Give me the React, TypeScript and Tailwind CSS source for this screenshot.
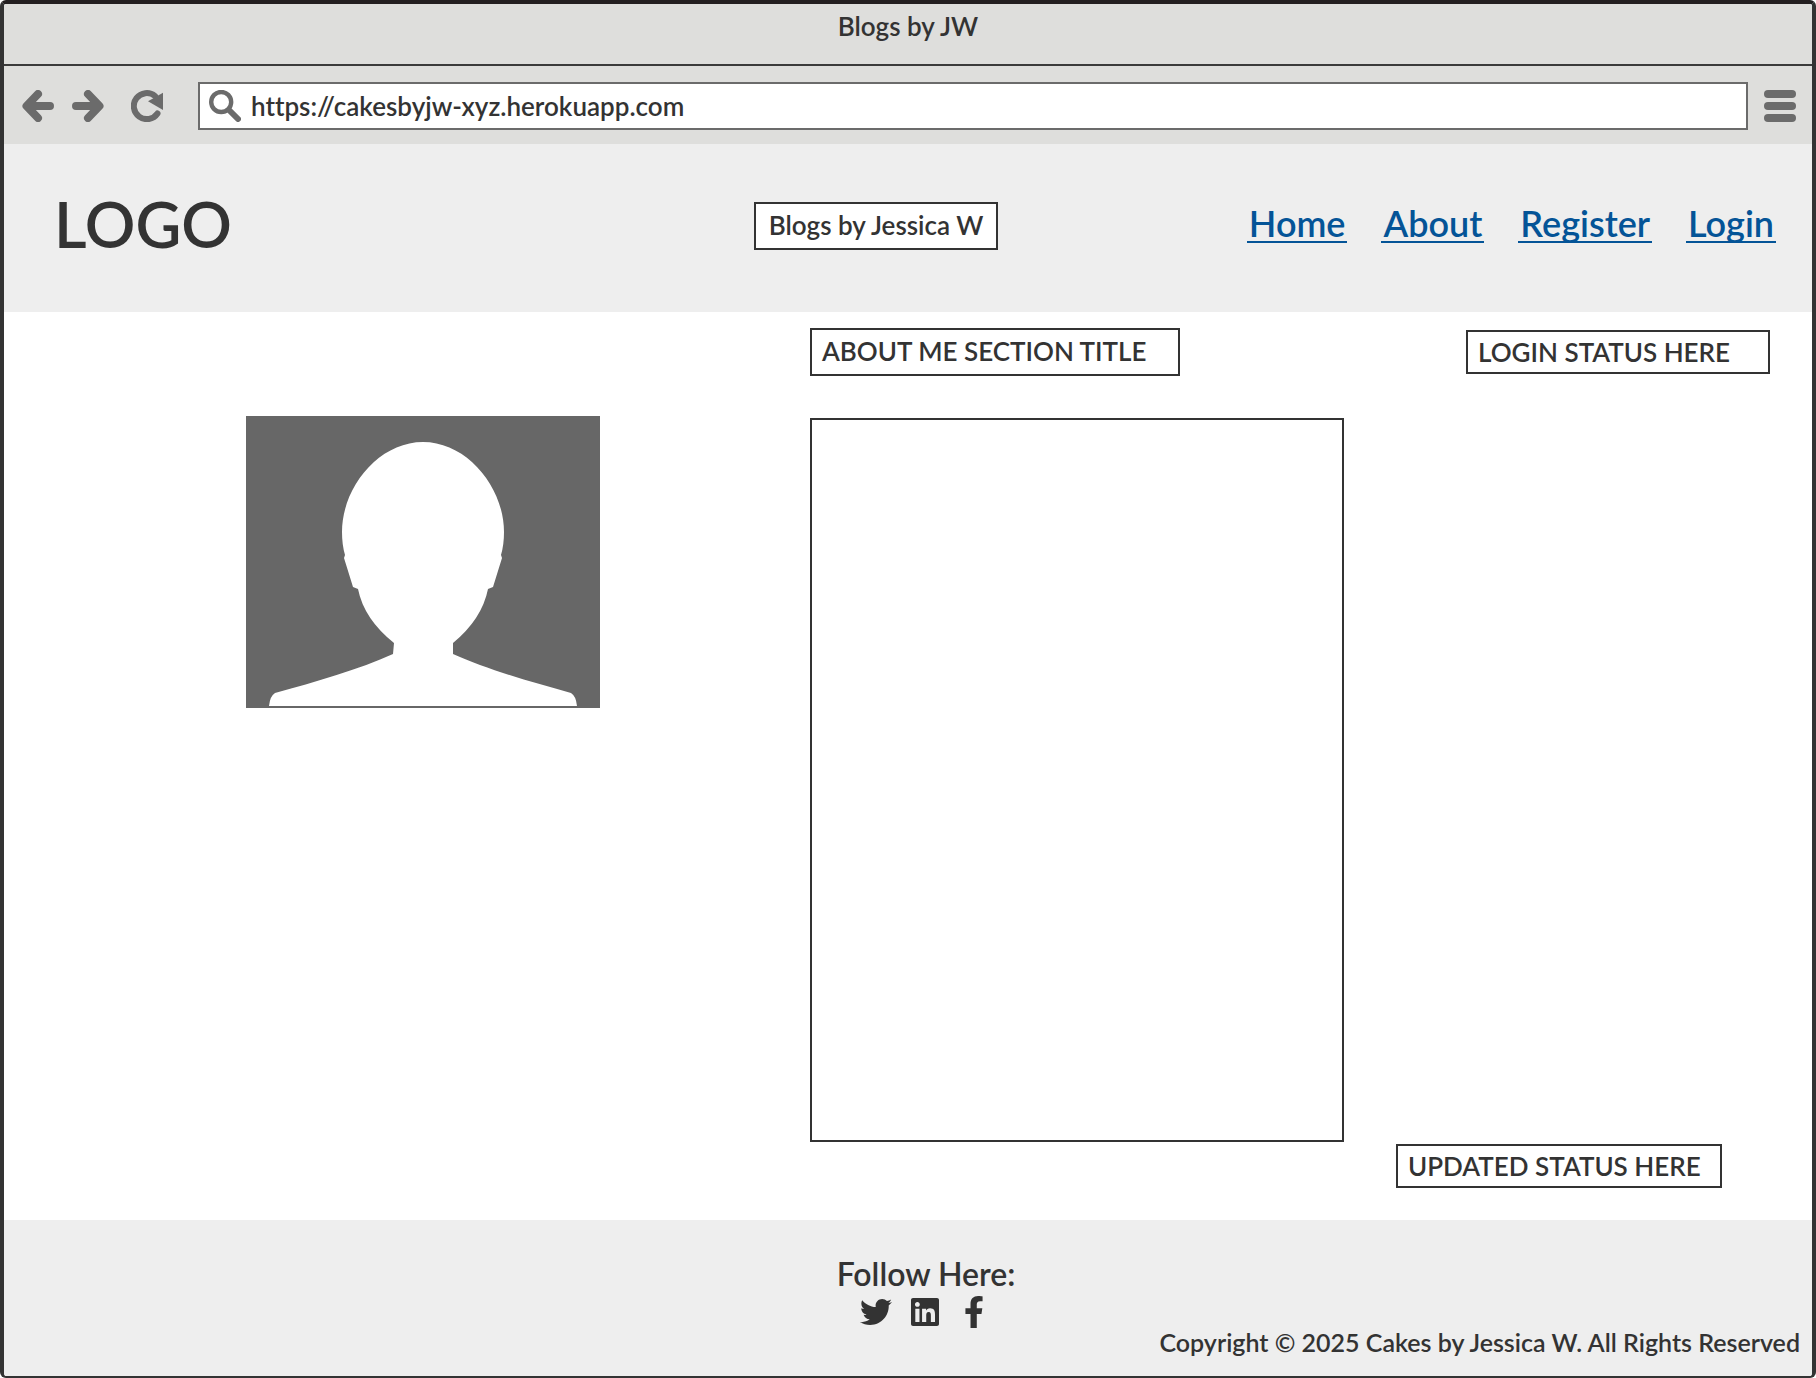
import type { ReactNode } from 'react';
import { FaFacebookF, FaLinkedin, FaTwitter } from 'react-icons/fa';

const navLinks = ['Home', 'About', 'Register', 'Login'];

const socialLinks = [
  { label: 'Twitter', icon: <FaTwitter className="size-8" /> },
  { label: 'LinkedIn', icon: <FaLinkedin className="size-8" /> },
  { label: 'Facebook', icon: <FaFacebookF className="size-8" /> },
];

function ToolButton({ label, children }: { label: string; children: ReactNode }) {
  return (
    <button type="button" aria-label={label} className="size-8 shrink-0 text-[#6b6b6b]">
      {children}
    </button>
  );
}

function ArrowIcon({ flip = false }: { flip?: boolean }) {
  return (
    <svg viewBox="0 0 32 32" className={flip ? 'size-8 -scale-x-100' : 'size-8'} fill="none" stroke="currentColor" strokeWidth="8" strokeLinecap="round" strokeLinejoin="round">
      <path d="M16 4 4.5 16 16 28M5 16h23" />
    </svg>
  );
}

function ReloadIcon() {
  return (
    <svg viewBox="0 0 32 32" className="size-8" fill="none" stroke="currentColor" strokeWidth="6" strokeLinecap="round">
      <path d="M26.5 23.5A13 13 0 1 1 24 6" />
      <path d="M32 2.7V20L17 11.3Z" fill="currentColor" stroke="none" />
    </svg>
  );
}

function SearchIcon() {
  return (
    <svg viewBox="0 0 32 32" className="size-8 shrink-0 text-[#6b6b6b]" fill="none" stroke="currentColor" strokeLinecap="round">
      <circle cx="12.2" cy="12" r="10" strokeWidth="4.4" />
      <path d="M20.5 20.5 29 29" strokeWidth="6" />
    </svg>
  );
}

function MenuIcon() {
  return (
    <svg viewBox="0 0 32 32" className="size-8" fill="currentColor">
      <rect width="32" height="8" rx="4" />
      <rect y="12" width="32" height="8" rx="4" />
      <rect y="24" width="32" height="8" rx="4" />
    </svg>
  );
}

function Avatar() {
  return (
    <svg viewBox="0 0 354 292" role="img" aria-label="Profile picture" className="w-[354px] bg-[#676767]">
      <path
        fill="#fff"
        d="M177 26C221 26 258 71 258 116Q258 129 255 139L256 142 247 171 242 173Q236 203 207 227L207 238C240 253 285 266 325 277Q330 280 331 290H23Q24 280 29 277C69 266 114 253 147 238L148 227Q118 203 112 173L107 171 98 142 99 139Q96 129 96 116C96 71 133 26 177 26Z"
      />
    </svg>
  );
}

function Box({ className, children }: { className: string; children: ReactNode }) {
  return (
    <div className={`flex items-center border-2 border-[#333] bg-white px-[10px] text-[26px] leading-8 whitespace-nowrap ${className}`}>
      {children}
    </div>
  );
}

export default function App() {
  return (
    <div className="flex min-h-screen flex-col overflow-hidden rounded-md border-4 border-b-2 border-[#333] border-t-[#231f20] bg-white font-['Lato',sans-serif] font-semibold text-[#333] [font-variant-ligatures:none]">
      <div className="h-[62px] border-b-2 border-[#3b3b3b] bg-[#dededc] pt-[6px] text-center text-[26px] leading-8">
        Blogs by JW
      </div>

      <div className="flex h-[78px] items-center bg-[#dededc] px-4 pt-[2px]">
        <div className="flex items-center pl-[2px]">
          <ToolButton label="Back"><ArrowIcon /></ToolButton>
          <div className="w-[18px]" />
          <ToolButton label="Forward"><ArrowIcon flip /></ToolButton>
          <div className="w-[27px]" />
          <ToolButton label="Reload"><ReloadIcon /></ToolButton>
        </div>
        <label className="mr-4 ml-[35px] flex h-12 flex-1 items-center gap-[10px] border-2 border-[#6b6b6b] bg-white px-[9px]">
          <SearchIcon />
          <input
            type="text"
            aria-label="Address"
            defaultValue="https://cakesbyjw-xyz.herokuapp.com"
            className="min-w-0 flex-1 bg-transparent text-[26px] leading-8 outline-none"
          />
        </label>
        <ToolButton label="Menu"><MenuIcon /></ToolButton>
      </div>

      <header className="grid h-[168px] grid-cols-[9fr_auto_10fr] items-center bg-[#eee] pr-9 pb-1 pl-[50px]">
        <div className="pb-1 text-[63px] leading-[72px]">LOGO</div>
        <Box className="h-12 min-w-[244px] justify-center pb-[2px]">Blogs by Jessica W</Box>
        <nav className="flex justify-end gap-[34px] pb-1">
          {navLinks.map((name) => (
            <a key={name} href={`#${name.toLowerCase()}`} className="border-b-2 border-[#045497] px-[2px] text-[36px] leading-9 text-[#045497]">
              {name}
            </a>
          ))}
        </nav>
      </header>

      <main className="grid flex-1 grid-cols-[806fr_534fr_468fr]">
        <div className="flex items-start justify-center pt-26 pl-8">
          <Avatar />
        </div>
        <section className="flex flex-col pt-4 pb-[78px]">
          <Box className="h-12 w-[370px] pb-[2px]">
            <h1>ABOUT ME SECTION TITLE</h1>
          </Box>
          <div className="mt-[42px] min-h-[400px] flex-1 border-2 border-[#333]" />
        </section>
        <aside className="flex flex-col justify-between pt-[18px] pb-8">
          <Box className="mr-[42px] h-11 w-[304px] self-end">LOGIN STATUS HERE</Box>
          <Box className="ml-[52px] h-11 w-[326px]">UPDATED STATUS HERE</Box>
        </aside>
      </main>

      <footer className="flex h-[156px] flex-col bg-[#eee] pt-9">
        <div className="pl-9 text-center text-[32px] leading-9">Follow Here:</div>
        <div className="flex items-center justify-center gap-[17px] pt-1 pl-[34px]">
          {socialLinks.map(({ label, icon }) => (
            <a key={label} href={`#${label.toLowerCase()}`} aria-label={label} className="flex size-8 items-center justify-center">
              {icon}
            </a>
          ))}
        </div>
        <p className="-mt-[2px] pr-3 text-right text-[25px] leading-8">
          Copyright © 2025 Cakes by Jessica W. All Rights Reserved
        </p>
      </footer>
    </div>
  );
}
